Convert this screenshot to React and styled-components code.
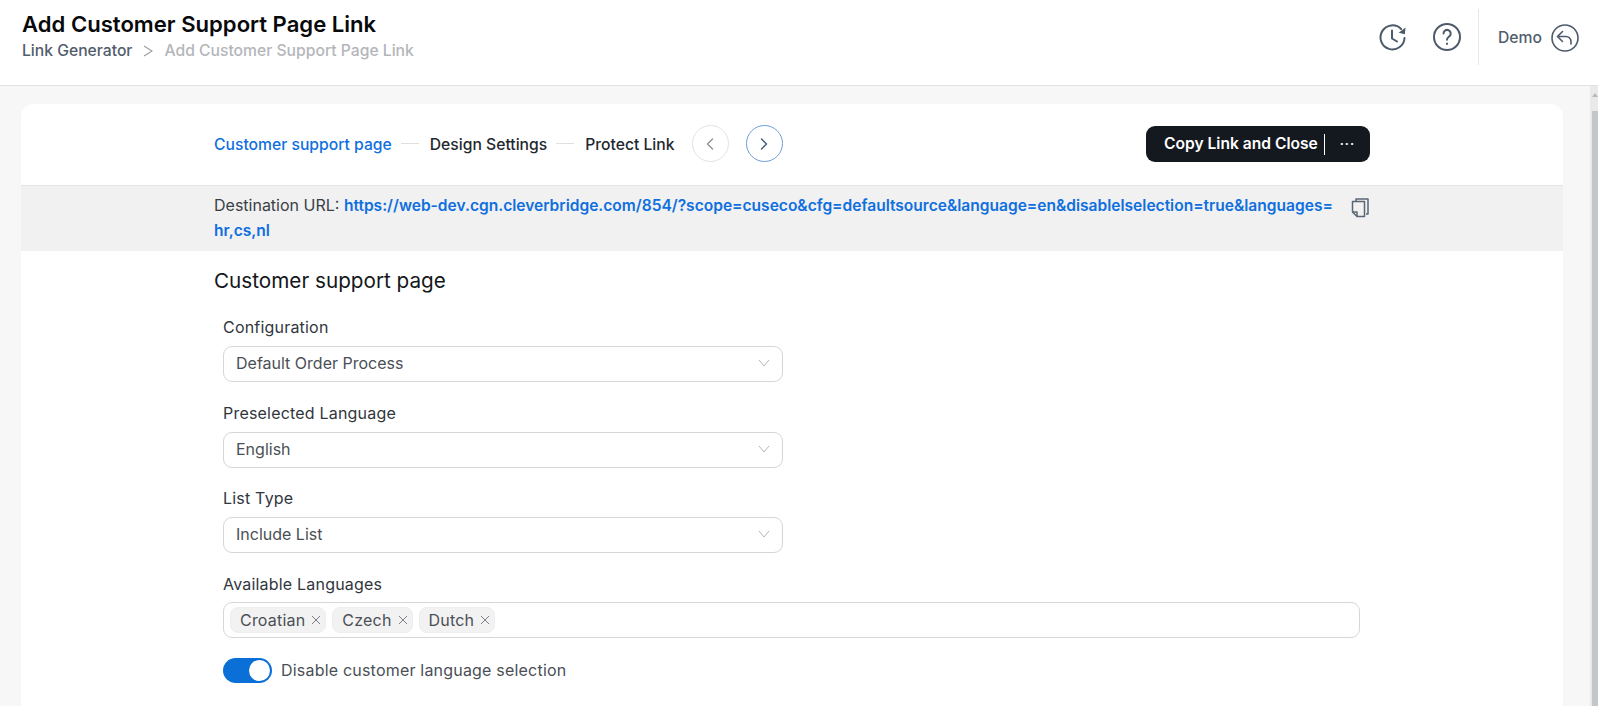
import React from 'react'
import styled, { createGlobalStyle } from 'styled-components'

const GlobalStyle = createGlobalStyle`
  html, body {
    margin: 0;
    height: 100%;
    overflow: hidden;
    background: #f7f7f7;
    font-family: "Inter", "Liberation Sans", sans-serif;
  }
  #root { height: 100%; }
  * { box-sizing: border-box; }
`

const Page = styled.div`
  height: 100vh;
  display: flex;
  flex-direction: column;
`

const Header = styled.header`
  flex: none;
  height: 86px;
  background: #fff;
  border-bottom: 1px solid #e2e2e2;
  display: flex;
  justify-content: space-between;
  padding: 9px 18px 0 22px;
`

const TitleBlock = styled.div`
  padding-top: 2px;
`

const Title = styled.h1`
  margin: 0;
  font-size: 22.1px;
  line-height: 26px;
  font-weight: 600;
  color: #08090b;
`

const Crumbs = styled.div`
  display: flex;
  align-items: center;
  gap: 11px;
  margin-top: 2px;
  font-size: 15.7px;
  line-height: 24px;
  font-weight: 500;
  color: #525d6c;
`

const CrumbCurrent = styled.span`
  color: #b4b6ba;
`

const Tools = styled.div`
  display: flex;
  align-items: flex-start;
`

const ToolIcon = styled.svg`
  width: 30px;
  height: 30px;
  margin: 13px 24px 0 0;
  fill: none;
  stroke: #4d5a6a;
  stroke-width: 2;
  stroke-linecap: round;
  stroke-linejoin: round;
`

const UserBox = styled.div`
  height: 56px;
  margin-left: -8px;
  padding: 6px 0 0 19px;
  border-left: 1px solid #e8e8e8;
  display: flex;
  align-items: flex-start;
  gap: 8px;
  font-size: 15.7px;
  font-weight: 500;
  color: #525d6c;
`

const UserName = styled.span`
  line-height: 46px;
`

const BackIcon = styled(ToolIcon)`
  margin: 8px 0 0 0;
  stroke-width: 1.6;
`

const Body = styled.div`
  flex: 1;
  min-height: 0;
  display: flex;
`

const Main = styled.main`
  flex: 1;
  min-width: 0;
  overflow: hidden;
  padding: 18px 27px 0 21px;
`

const ScrollTrack = styled.div`
  flex: none;
  width: 8px;
  background: #eaeaea;
  display: flex;
  flex-direction: column;
  align-items: flex-end;
`

const ScrollArrow = styled.svg`
  flex: none;
  width: 6px;
  height: 25px;
  fill: #b5b9be;
`

const ScrollThumb = styled.div`
  flex: 1;
  width: 6px;
  background: #c3c7cc;
`

const Card = styled.section`
  background: #fff;
  border-radius: 12px;
  height: 640px;
`

const Toolbar = styled.div`
  height: 81px;
  padding: 21px 193px 0 193px;
  display: flex;
  align-items: flex-start;
  justify-content: space-between;
`

const Steps = styled.div`
  display: flex;
  align-items: center;
  height: 37px;
`

const Step = styled.span`
  padding-top: 2px;
  font-size: 15.7px;
  font-weight: 500;
  color: ${p => (p.$active ? '#0f6fde' : '#23282f')};
`

const StepDash = styled.span`
  width: 18px;
  height: 1px;
  margin: 0 11px 0 9px;
  background: #dfdfdf;
`

const NavButton = styled.button`
  width: 37px;
  height: 37px;
  padding: 0;
  margin-left: ${p => p.$gap}px;
  border-radius: 50%;
  background: #fff;
  border: 1px solid ${p => (p.$active ? '#6c9fd8' : '#e3e3e3')};
  display: flex;
  align-items: center;
  justify-content: center;
  color: ${p => (p.$active ? '#3c5a80' : '#8b9199')};
`

const NavIcon = styled.svg`
  width: 14px;
  height: 14px;
  fill: none;
  stroke: currentColor;
  stroke-width: 1.4;
  stroke-linecap: round;
  stroke-linejoin: round;
`

const PrimaryButton = styled.button`
  width: 224px;
  height: 36px;
  margin-top: 1px;
  padding: 0 0 2px 18px;
  border: none;
  border-radius: 9px;
  background: #14191f;
  color: #fff;
  display: flex;
  align-items: center;
  font-family: inherit;
  font-size: 15.6px;
  font-weight: 600;
`

const ButtonSep = styled.span`
  width: 1px;
  height: 21px;
  margin: 2px 0 0 6px;
  background: #fff;
`

const ButtonMore = styled.span`
  flex: 1;
  text-align: center;
  font-size: 13px;
  letter-spacing: 1px;
  line-height: 1;
`

const UrlBand = styled.div`
  height: 66px;
  background: #f1f1f1;
  border-top: 1px solid #e4e4e4;
  padding: 7px 193px 0 193px;
  display: flex;
  justify-content: space-between;
  font-size: 16px;
  line-height: 25px;
  color: #3a3f46;
`

const UrlText = styled.div`
  width: 1122px;
`

const UrlLink = styled.a`
  color: #0f6fde;
  font-size: 15.55px;
  font-weight: 600;
  word-break: break-all;
`

const CopyIcon = styled.svg`
  width: 18px;
  height: 20px;
  margin: 5px 1px 0 0;
  fill: none;
  stroke: #5a6675;
  stroke-width: 1.5;
  stroke-linejoin: round;
`

const Form = styled.div`
  padding: 16px 194px 0 193px;
`

const SectionTitle = styled.h2`
  margin: 0 0 22px;
  font-size: 20.7px;
  line-height: 28px;
  font-weight: 400;
  color: #14171b;
`

const Field = styled.div`
  margin: 0 9px 20.5px;
`

const Label = styled.div`
  font-size: 16px;
  letter-spacing: 0.2px;
  line-height: 20px;
  margin-bottom: 9px;
  color: #31363d;
`

const Select = styled.div`
  width: 560px;
  height: 36px;
  padding: 0 12px 2px;
  background: #fff;
  border: 1px solid #d6d6d6;
  border-radius: 9px;
  display: flex;
  align-items: center;
  justify-content: space-between;
  font-size: 16px;
  color: #4a4f56;
`

const Chevron = styled.svg`
  width: 12px;
  height: 12px;
  fill: none;
  stroke: #a9adb2;
  stroke-width: 0.9;
`

const TagInput = styled.div`
  width: 1137px;
  height: 36px;
  margin-top: -1px;
  padding: 0 6px;
  border: 1px solid #d6d6d6;
  border-radius: 9px;
  display: flex;
  align-items: center;
  gap: 6px;
`

const Tag = styled.span`
  height: 26px;
  padding: 0 4px 0 9px;
  border: 1px solid #eeeeee;
  border-radius: 8px;
  background: #f2f2f2;
  display: flex;
  align-items: center;
  gap: 6px;
  font-size: 16px;
  letter-spacing: 0.2px;
  color: #4a4f56;
`

const TagClose = styled.svg`
  width: 10px;
  height: 10px;
  fill: none;
  stroke: #7c8086;
  stroke-width: 1;
`

const ToggleRow = styled.div`
  margin: 9px 9px 0;
  display: flex;
  align-items: center;
  gap: 9px;
  font-size: 16px;
  letter-spacing: 0.2px;
  color: #4a4f56;
`

const ToggleLabel = styled.span`
  padding-bottom: 2px;
`

const ToggleTrack = styled.span`
  width: 49px;
  height: 25px;
  padding: 2px;
  border-radius: 13px;
  background: #0b6fd8;
  display: flex;
  justify-content: flex-end;
`

const ToggleKnob = styled.span`
  width: 21px;
  height: 21px;
  border-radius: 50%;
  background: #fff;
`

const languages = ['Croatian', 'Czech', 'Dutch']
const selects = [
  ['Configuration', 'Default Order Process'],
  ['Preselected Language', 'English'],
  ['List Type', 'Include List'],
]

export default function App() {
  return (
    <Page>
      <GlobalStyle />
      <Header>
        <TitleBlock>
          <Title>Add Customer Support Page Link</Title>
          <Crumbs>
            <span>Link Generator</span>
            <svg width="10" height="12" viewBox="0 0 10 12" fill="none" stroke="#9a9ea4" strokeWidth="1.2"><path d="M1 1l8 5-8 5" /></svg>
            <CrumbCurrent>Add Customer Support Page Link</CrumbCurrent>
          </Crumbs>
        </TitleBlock>
        <Tools>
          <ToolIcon viewBox="0 0 30 30">
            <path d="M26.5 16a12 12 0 1 1-3.4-9" />
            <path d="M27.5 5.5l-.6 6.8-6.2-1.6z" fill="#4d5a6a" stroke="none" />
            <path d="M14 8.5v8l5 3" />
          </ToolIcon>
          <ToolIcon viewBox="0 0 30 30">
            <circle cx="15" cy="15" r="13" />
            <path d="M11.5 11.5a3.6 3.6 0 1 1 5.6 3c-1.4 1-2.1 1.6-2.1 3.2" />
            <path d="M15 21.6v.4" />
          </ToolIcon>
          <UserBox>
            <UserName>Demo</UserName>
            <BackIcon viewBox="0 0 30 30">
              <circle cx="15" cy="15" r="13" />
              <path d="M12.5 8.5L7.5 13.5l5 5" />
              <path d="M8 13.5h8a5 5 0 0 1 5 5v2.5" />
            </BackIcon>
          </UserBox>
        </Tools>
      </Header>
      <Body>
        <Main>
          <Card>
            <Toolbar>
              <Steps>
                <Step $active>Customer support page</Step>
                <StepDash />
                <Step>Design Settings</Step>
                <StepDash />
                <Step>Protect Link</Step>
                <NavButton $gap={17} aria-label="Previous">
                  <NavIcon viewBox="0 0 14 14"><path d="M9.5 2L4.5 7l5 5" /></NavIcon>
                </NavButton>
                <NavButton $gap={17} $active aria-label="Next">
                  <NavIcon viewBox="0 0 14 14"><path d="M4.5 2l5 5-5 5" /></NavIcon>
                </NavButton>
              </Steps>
              <PrimaryButton>
                Copy Link and Close
                <ButtonSep />
                <ButtonMore>···</ButtonMore>
              </PrimaryButton>
            </Toolbar>
            <UrlBand>
              <UrlText>
                Destination URL: <UrlLink>https://web-dev.cgn.cleverbridge.com/854/?scope=cuseco&amp;cfg=defaultsource&amp;language=en&amp;disablelselection=true&amp;languages=hr,cs,nl</UrlLink>
              </UrlText>
              <CopyIcon viewBox="0 0 18 20">
                <path d="M5 3V1h12v15h-2" />
                <path d="M1.5 3.5h12v15H6L1.5 14z" />
                <path d="M1.5 14H6v4.5" />
              </CopyIcon>
            </UrlBand>
            <Form>
              <SectionTitle>Customer support page</SectionTitle>
              {selects.map(([label, value]) => (
                <Field key={label}>
                  <Label>{label}</Label>
                  <Select>
                    {value}
                    <Chevron viewBox="0 0 12 12"><path d="M1 3l5 6 5-6" /></Chevron>
                  </Select>
                </Field>
              ))}
              <Field>
                <Label>Available Languages</Label>
                <TagInput>
                  {languages.map(lang => (
                    <Tag key={lang}>
                      {lang}
                      <TagClose viewBox="0 0 10 10"><path d="M1 1l8 8M9 1l-8 8" /></TagClose>
                    </Tag>
                  ))}
                </TagInput>
              </Field>
              <ToggleRow>
                <ToggleTrack><ToggleKnob /></ToggleTrack>
                <ToggleLabel>Disable customer language selection</ToggleLabel>
              </ToggleRow>
            </Form>
          </Card>
        </Main>
        <ScrollTrack>
          <ScrollArrow viewBox="0 0 6 25"><path d="M3 7l3 4H0z" /></ScrollArrow>
          <ScrollThumb />
        </ScrollTrack>
      </Body>
    </Page>
  )
}
